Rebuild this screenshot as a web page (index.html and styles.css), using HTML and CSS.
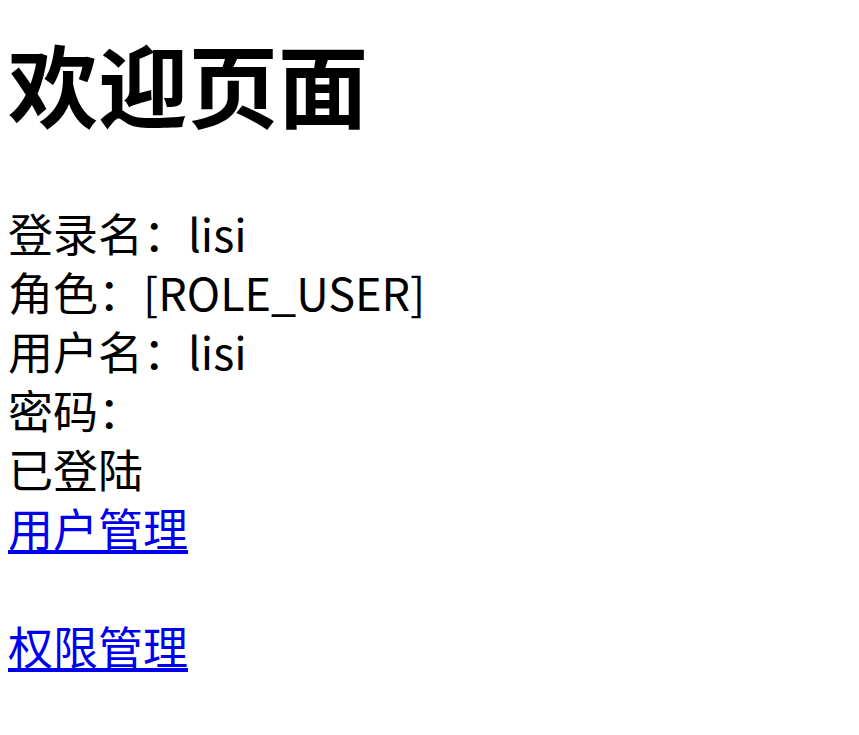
FILE: index.html
```html
<!DOCTYPE html>
<html lang="zh-CN">
<head>
<meta charset="utf-8">
<title>欢迎页面</title>
<link rel="stylesheet" href="styles.css">
</head>
<body>
<h1 class="title">欢迎页面</h1>
<div class="info">
登录名：lisi<br>
角色：[ROLE_USER]<br>
用户名：lisi<br>
密码：<br>
已登陆<br>
<a class="link" href="#">用户管理</a><br><br>
<a class="link" href="#">权限管理</a>
</div>
</body>
</html>
```
FILE: styles.css
```css
html, body {
  background: #ffffff;
}
body {
  margin: 8px;
  font-family: "Noto Sans CJK SC", "Noto Sans", sans-serif;
  color: #000000;
}
.title {
  font-size: 90px;
  font-weight: 700;
  line-height: 118px;
  margin: 15px 0 62px;
}
.info {
  font-size: 45px;
  line-height: 59px;
}
.link {
  color: #0000ee;
  text-decoration: underline;
}
```
